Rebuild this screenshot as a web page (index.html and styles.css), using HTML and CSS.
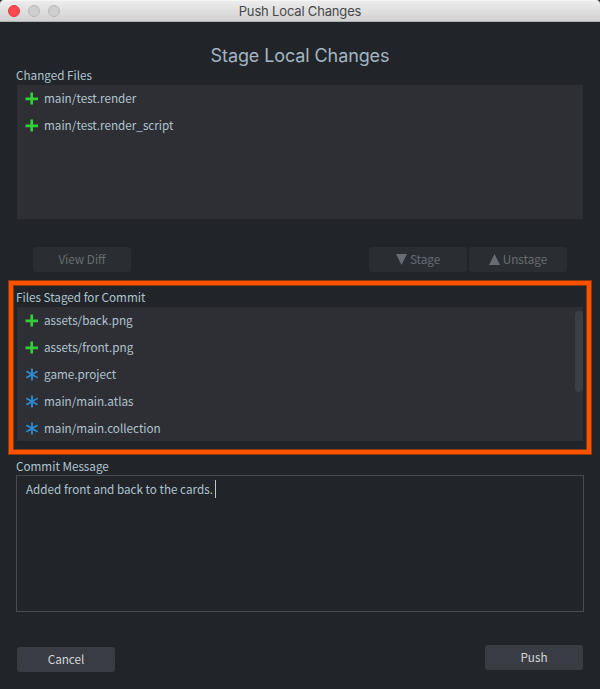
FILE: index.html
```
<!DOCTYPE html>
<html lang="en">
<head>
<meta charset="utf-8">
<title>Push Local Changes</title>
<link rel="stylesheet" href="styles.css">
</head>
<body>
<svg class="defs" width="0" height="0" aria-hidden="true">
  <symbol id="added" viewBox="0 0 13 13"><path d="M6.7 .5v12M.5 6.8h12.5" stroke="#32cd38" stroke-width="2.7"/></symbol>
  <symbol id="modified" viewBox="0 0 13 13"><path d="M7 .5v12M1.4 3.2l11.2 6.6M12.6 3.2L1.4 9.8" stroke="#2f8ad0" stroke-width="1.9"/></symbol>
</svg>
<div class="window">
  <header class="titlebar">
    <div class="lights"><i class="light close"></i><i class="light"></i><i class="light"></i></div>
    <span class="title">Push Local Changes</span>
  </header>
  <main class="content">
    <h1 class="heading"><span>Stage Local Changes</span></h1>
    <div class="label changed-label">Changed Files</div>
    <ul class="files">
      <li><svg><use href="#added"/></svg><span>main/test.render</span></li>
      <li><svg><use href="#added"/></svg><span>main/test.render_script</span></li>
    </ul>
    <div class="actions">
      <button class="btn" disabled>View Diff</button>
      <div class="pair">
        <button class="btn" disabled><svg class="tri" viewBox="0 0 11 11"><path d="M0 0h11L5.5 11z"/></svg>Stage</button>
        <button class="btn" disabled><svg class="tri" viewBox="0 0 11 11"><path d="M0 11h11L5.5 0z"/></svg>Unstage</button>
      </div>
    </div>
    <section class="staged">
      <div class="label staged-label">Files Staged for Commit</div>
      <ul class="files">
        <li><svg><use href="#added"/></svg><span>assets/back.png</span></li>
        <li><svg><use href="#added"/></svg><span>assets/front.png</span></li>
        <li><svg><use href="#modified"/></svg><span>game.project</span></li>
        <li><svg><use href="#modified"/></svg><span>main/main.atlas</span></li>
        <li><svg><use href="#modified"/></svg><span>main/main.collection</span></li>
      </ul>
      <div class="scroll-thumb"></div>
      <div class="highlight"></div>
    </section>
    <div class="label commit-label">Commit Message</div>
    <div class="message"><span>Added front and back to the cards.</span><i class="caret"></i></div>
    <footer class="footer">
      <button class="btn cancel">Cancel</button>
      <button class="btn push">Push</button>
    </footer>
  </main>
</div>
</body>
</html>
```
FILE: styles.css
```
* { box-sizing: border-box; }
body {
  margin: 0;
  background: #212529;
  color: #b0c4cf;
  font: 11.7px/18px "Noto Sans CJK SC", "Noto Sans", sans-serif;
}
.defs { position: absolute; }
.window { width: 600px; height: 689px; overflow: hidden; background: #212529; }
.titlebar {
  position: relative;
  display: flex;
  align-items: center;
  justify-content: center;
  height: 22px;
  background: linear-gradient(#ececec, #d2d2d2);
  border-top: 1px solid #f6f6f6;
  border-bottom: 1px solid #afafaf;
  border-radius: 4px 4px 0 0;
}
.lights { position: absolute; left: 8px; top: 4px; display: flex; gap: 8px; }
.light { width: 12px; height: 12px; border: 1px solid #b8b8b8; border-radius: 50%; background: #cfcfcf; }
.close { background: #fc4b50; border-color: #e6383e; }
.title { font: 13px/20px Inter, sans-serif; color: #484848; letter-spacing: -0.17px; }
.content { display: flex; flex-direction: column; padding: 0 16px; }
.heading {
  margin: 22px 0 0;
  height: 24px;
  font: 400 18px/24px Inter, sans-serif;
  letter-spacing: -0.1px;
  color: #a4b6c1;
  text-align: center;
}
.label { height: 18px; white-space: nowrap; }
.changed-label { height: 19px; margin: -2px 0 0; }
.files {
  list-style: none;
  margin: 0 1px;
  padding: 0;
  height: 134px;
  background: #2e2f34;
}
.files li { display: flex; align-items: center; height: 27px; padding: 0 0 0 8px; }
.files span { padding-bottom: 1px; }
.files svg { width: 13px; height: 13px; margin-right: 6px; }
.actions { display: flex; justify-content: space-between; margin: 28px 17px 0 17px; }
.pair { display: flex; gap: 2px; }
.btn {
  display: flex;
  align-items: center;
  justify-content: center;
  width: 98px;
  height: 25px;
  margin: 0;
  padding: 0 0 1px;
  border: 0;
  border-radius: 3px;
  background: #393c43;
  color: #d4d8da;
  font: inherit;
}
.btn:disabled { background: #2a2d31; color: #686d72; }
.tri { width: 11px; height: 11px; margin-right: 3px; fill: #686d72; }
.staged { position: relative; margin-top: 16px; height: 153px; }
.staged-label { height: 19px; }
.scroll-thumb { position: absolute; right: 1px; top: 23px; width: 8px; height: 81px; border-radius: 4px; background: #3b3e45; }
.highlight {
  position: absolute;
  inset: -8px -8px -14px -8px;
  border: 6px solid #ff5100;
  outline: 1px solid #8c3909;
  outline-offset: -1px;
}
.highlight::after { content: ""; position: absolute; inset: -1px; border: 1px solid #8c3909; }
.commit-label { margin-top: 16px; }
.message { display: flex; height: 137px; padding: 4px 9px; border: 1px solid #484b4f; }
.caret { width: 1px; height: 18px; margin-left: 2px; background: #b9c7ce; }
.footer { display: flex; justify-content: space-between; margin: 33px 1px 0; }
.cancel { margin-top: 2px; }
```
